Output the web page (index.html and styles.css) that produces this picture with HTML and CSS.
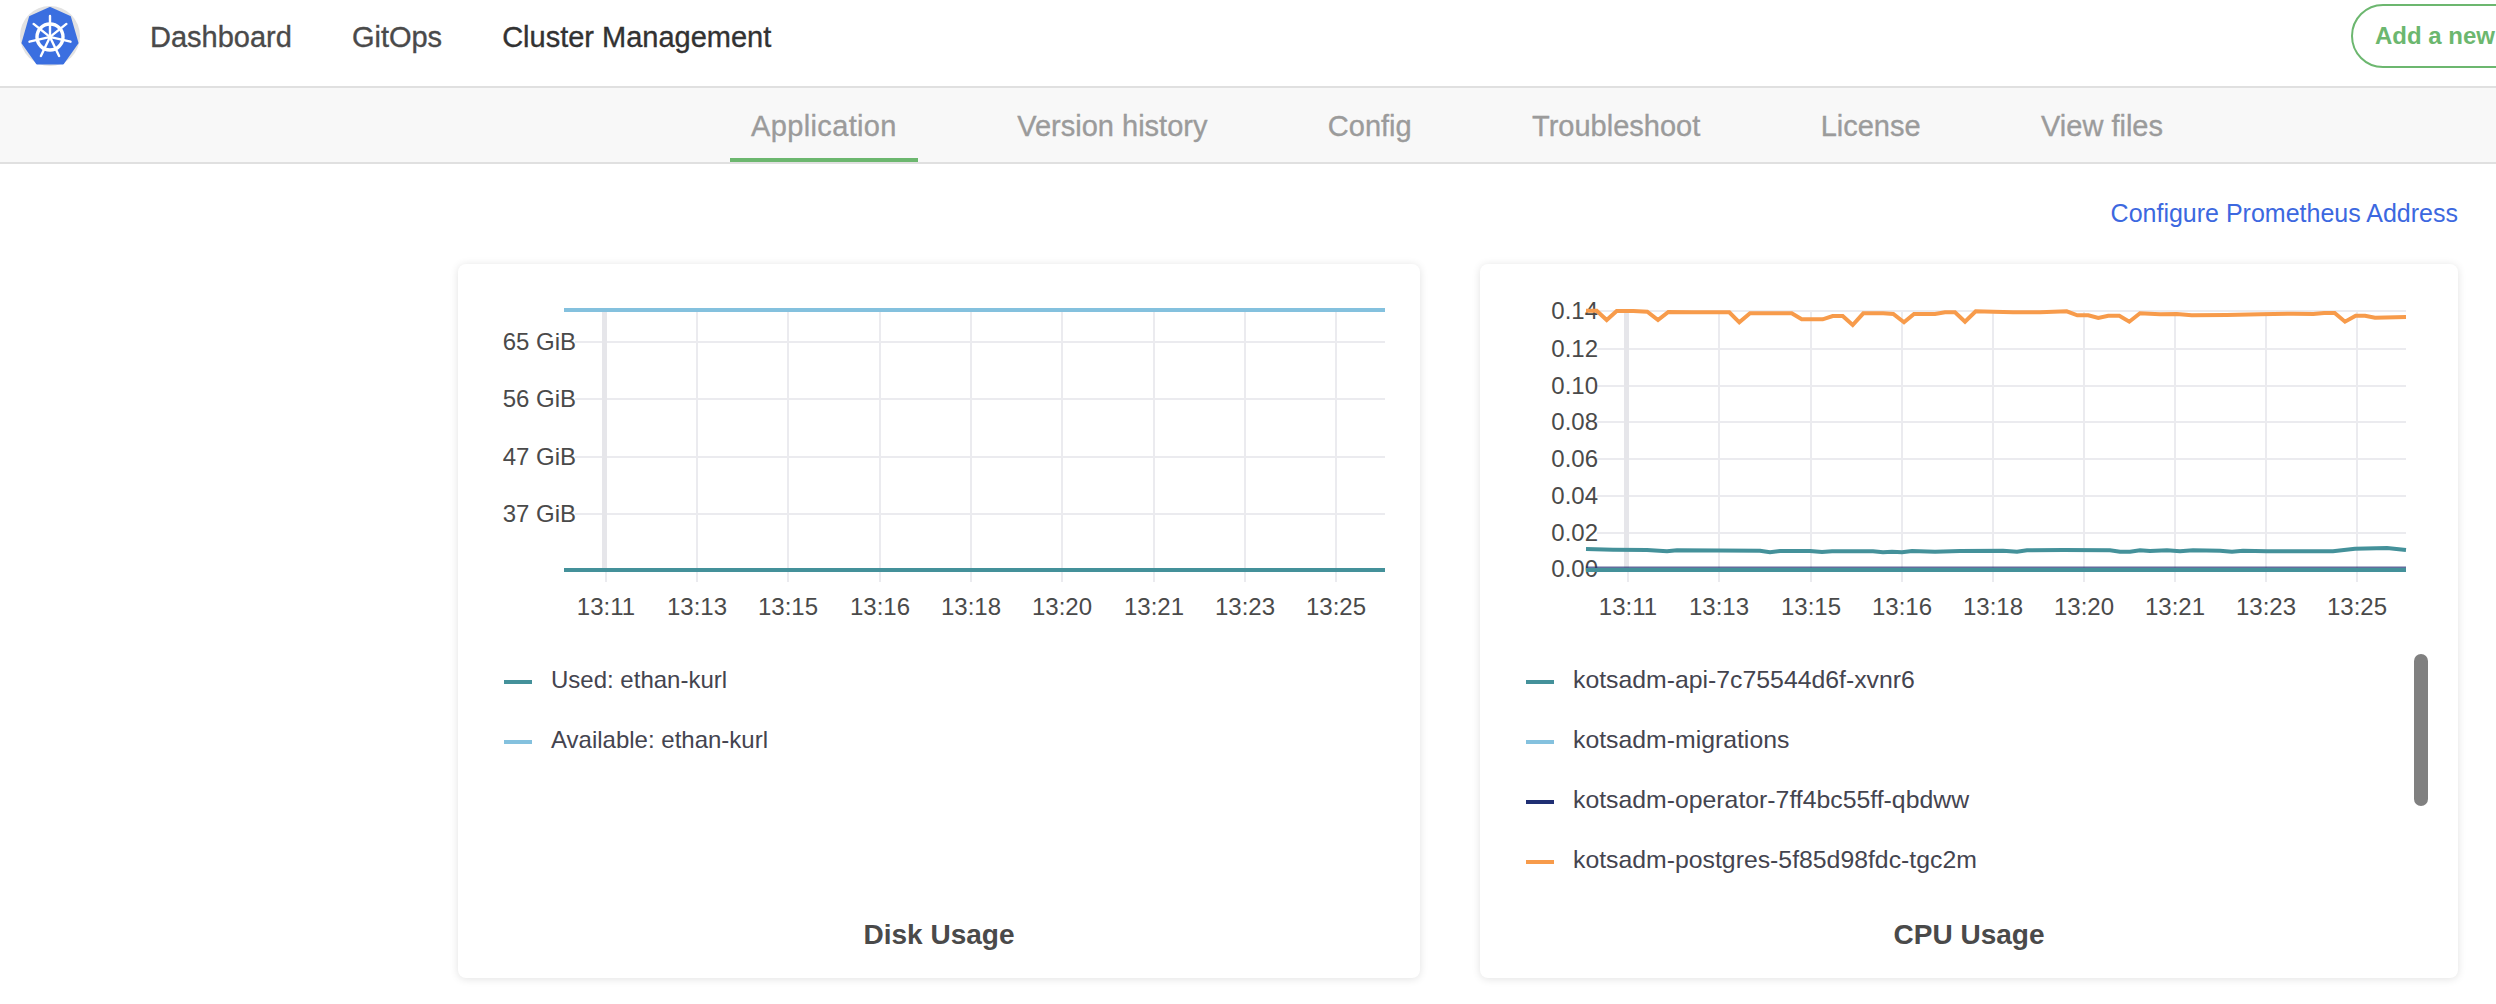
FILE: index.html
```html
<!DOCTYPE html>
<html lang="en">
<head>
  <meta charset="UTF-8" />
  <title>Application</title>
  <link rel="stylesheet" href="styles.css">
</head>
<body>
  <header class="topbar">
    <svg class="logo" viewBox="0 0 60 60" aria-label="Kubernetes">
      <ellipse cx="30" cy="30" rx="30" ry="30" fill="#e2e2e2" />
      <polygon points="30,2 50,11 57.5,37 43,57.5 17,57.5 2.5,37 10,11" fill="#3b6fe0" stroke="#3b6fe0" stroke-width="2" stroke-linejoin="round" />
      <circle cx="30" cy="31" r="13" fill="none" stroke="#fff" stroke-width="3.4" />
      <path d="M30 28V10M32.3 29.1L46.4 17.9M32.9 31.7L50.5 35.7M31.3 33.7L39.1 49.9M28.7 33.7L20.9 49.9M27.1 31.7L9.5 35.7M27.7 29.1L13.6 17.9" stroke="#fff" stroke-width="2.4" stroke-linecap="round" />
      <circle cx="30" cy="31" r="2.6" fill="#fff" />
    </svg>
    <nav class="mainnav">
      <a>Dashboard</a>
      <a>GitOps</a>
      <a class="active">Cluster Management</a>
    </nav>
    <button class="add-btn">Add a new</button>
  </header>

  <nav class="subnav">
    <a class="active">Application</a>
    <a>Version history</a>
    <a>Config</a>
    <a>Troubleshoot</a>
    <a>License</a>
    <a>View files</a>
  </nav>

  <main class="content">
    <div class="link-row"><a class="link">Configure Prometheus Address</a></div>

    <div class="cards">
      <section class="card card-disk">
        <!-- viewBox is in page pixels so the points read straight off the screen -->
        <svg class="chart" viewBox="458 264 962 366">
          <path class="grid" d="M575 342H1385M575 399H1385M575 457H1385M575 514H1385" />
          <path class="grid" d="M606 312V582M697 312V582M788 312V582M880 312V582M971 312V582M1062 312V582M1154 312V582M1245 312V582M1336 312V582" />
          <path class="axis" d="M604.5 312V570" />
          <g class="y-labels">
            <text x="576" y="350">65 GiB</text>
            <text x="576" y="407">56 GiB</text>
            <text x="576" y="465">47 GiB</text>
            <text x="576" y="522">37 GiB</text>
          </g>
          <g class="x-labels">
            <text x="606" y="615">13:11</text>
            <text x="697" y="615">13:13</text>
            <text x="788" y="615">13:15</text>
            <text x="880" y="615">13:16</text>
            <text x="971" y="615">13:18</text>
            <text x="1062" y="615">13:20</text>
            <text x="1154" y="615">13:21</text>
            <text x="1245" y="615">13:23</text>
            <text x="1336" y="615">13:25</text>
          </g>
          <path class="series s-blue" d="M564 310H1385" />
          <path class="series s-teal" d="M564 570H1385" />
        </svg>
        <ul class="legend">
          <li><span class="swatch bg-teal"></span>Used: ethan-kurl</li>
          <li><span class="swatch bg-blue"></span>Available: ethan-kurl</li>
        </ul>
        <h2 class="card-title">Disk Usage</h2>
      </section>

      <section class="card card-cpu">
        <svg class="chart" viewBox="1480 264 978 366">
          <path class="grid" d="M1597 311H2406M1597 349H2406M1597 386H2406M1597 422H2406M1597 459H2406M1597 496H2406M1597 533H2406" />
          <path class="grid" d="M1628 311V582M1719 311V582M1811 311V582M1902 311V582M1993 311V582M2084 311V582M2175 311V582M2266 311V582M2357 311V582" />
          <path class="axis" d="M1626.5 311V570" />
          <g class="y-labels">
            <text x="1598" y="319">0.14</text>
            <text x="1598" y="357">0.12</text>
            <text x="1598" y="394">0.10</text>
            <text x="1598" y="430">0.08</text>
            <text x="1598" y="467">0.06</text>
            <text x="1598" y="504">0.04</text>
            <text x="1598" y="541">0.02</text>
            <text x="1598" y="577">0.00</text>
          </g>
          <g class="x-labels">
            <text x="1628" y="615">13:11</text>
            <text x="1719" y="615">13:13</text>
            <text x="1811" y="615">13:15</text>
            <text x="1902" y="615">13:16</text>
            <text x="1993" y="615">13:18</text>
            <text x="2084" y="615">13:20</text>
            <text x="2175" y="615">13:21</text>
            <text x="2266" y="615">13:23</text>
            <text x="2357" y="615">13:25</text>
          </g>
          <path class="series s-navy thin" d="M1586 568.5H2406" />
          <path class="series s-teal" d="M1586 570H2406" />
          <polyline class="series s-teal" points="1586,549 1613,549.7 1647,550 1667,551.3 1677,550.3 1760,550.7 1770,552.3 1780,551 1810,551 1822,552 1832,551.3 1873,551.3 1883,552.3 1892,551.7 1902,552.3 1912,551 1935,551.7 1960,551 2003,550.7 2017,551.7 2027,550.3 2063,550 2110,550.3 2120,551.7 2130,551.7 2140,550.3 2150,551 2167,550.3 2180,551.3 2193,550.3 2220,550.7 2232,551.7 2243,550.7 2267,551.3 2333,551.3 2355,548.7 2387,548 2406,550" />
          <polyline class="series s-orange" points="1586,310.7 1596.7,310.7 1606.7,320 1616.7,311 1633.3,311 1647.3,311.7 1658,320 1668.3,312 1693.3,312.3 1729.3,312.3 1739.3,322.3 1750,313.3 1791.7,313.3 1801.7,319.3 1822.7,319.3 1832.7,316 1842.7,316 1852.7,325 1863.3,313.3 1883.3,313.3 1893.3,314 1904,322.3 1914,314 1935,314 1945,312.3 1955,312.3 1965,321.7 1975.7,311.3 1993.3,311.7 2013.3,312.3 2040,312.3 2066.7,311.3 2077.3,315.3 2088.3,315.3 2098.3,318 2108.3,315.7 2119.3,315.7 2129.3,321.7 2140,313.3 2160,314.3 2176.7,314 2191.7,315.3 2226.7,315 2260,314.3 2293.3,313.7 2313.3,314 2324,313 2334.7,313 2345,321.7 2355.7,315.7 2365,315.7 2375,317.7 2406,317" />
        </svg>
        <ul class="legend">
          <li><span class="swatch bg-teal"></span>kotsadm-api-7c75544d6f-xvnr6</li>
          <li><span class="swatch bg-blue"></span>kotsadm-migrations</li>
          <li><span class="swatch bg-navy"></span>kotsadm-operator-7ff4bc55ff-qbdww</li>
          <li><span class="swatch bg-orange"></span>kotsadm-postgres-5f85d98fdc-tgc2m</li>
          <li class="scroll-thumb"></li>
        </ul>
        <h2 class="card-title">CPU Usage</h2>
      </section>
    </div>
  </main>
</body>
</html>
```

FILE: styles.css
```css
html, body {
  margin: 0;
  height: 100%;
  overflow: hidden;
}
body {
  font-family: "Liberation Sans", Arial, sans-serif;
  background: #fff;
  color: #4a4a4a;
}
a {
  cursor: pointer;
}

/* top bar */
.topbar {
  display: flex;
  align-items: center;
  height: 72px;
  padding: 0 0 14px 20px;
  border-bottom: 2px solid #e0e0e0;
}
.logo {
  width: 60px;
  height: 60px;
  flex-shrink: 0;
}
.mainnav {
  display: flex;
  gap: 60px;
  margin-left: 70px;
  padding-top: 2px;
  font-size: 29px;
  -webkit-text-stroke: 0.35px currentColor;
}
.mainnav .active {
  color: #323232;
}
/* runs off the right edge of the window */
.add-btn {
  flex-shrink: 0;
  width: 200px;
  height: 64px;
  margin-left: auto;
  margin-right: -55px;
  padding: 0 0 0 22px;
  border: 2px solid #6cb76f;
  border-radius: 32px;
  background: #fff;
  color: #6cb76f;
  font: bold 24px "Liberation Sans", Arial, sans-serif;
  text-align: left;
}

/* sub navigation */
.subnav {
  display: flex;
  gap: 78.4px;
  height: 74px;
  padding-left: 730px;
  background: #f8f8f8;
  border-bottom: 2px solid #e0e0e0;
  color: #9b9b9b;
  font-size: 29px;
  -webkit-text-stroke: 0.35px currentColor;
}
.subnav a {
  display: flex;
  align-items: center;
  padding: 7px 21px 0;
  border-bottom: 4px solid transparent;
}
.subnav .active {
  border-bottom-color: #6cb76f;
  letter-spacing: 0.36px;
}

/* content */
.content {
  padding: 0 38px 0 458px;
}
.link-row {
  display: flex;
  justify-content: flex-end;
  height: 100px;
  padding-top: 34px;
  box-sizing: border-box;
}
.link {
  color: #3c68e0;
  font-size: 25px;
  line-height: 30px;
}
.cards {
  display: flex;
  gap: 60px;
}
.card {
  display: flex;
  flex-direction: column;
  box-sizing: border-box;
  height: 714px;
  border-radius: 8px;
  background: #fff;
  box-shadow: 0 1px 8px rgba(0,0,0,0.12);
}
.card-disk {
  width: 962px;
}
.card-cpu {
  width: 978px;
}
.chart {
  display: block;
  width: 100%;
  height: 366px;
}
.grid {
  fill: none;
  stroke: #ebebef;
  stroke-width: 2;
}
.axis {
  fill: none;
  stroke: #e6e6ea;
  stroke-width: 5;
}
.y-labels, .x-labels {
  fill: #4a4a4a;
  font-size: 24px;
}
.y-labels {
  text-anchor: end;
}
.x-labels {
  text-anchor: middle;
}
.series {
  fill: none;
  stroke-width: 4;
}
.series.thin {
  opacity: 0.7;
}
.s-teal { stroke: #44919a; }
.s-blue { stroke: #84c1de; }
.s-navy { stroke: #1f2f73; }
.s-orange { stroke: #f79b4b; }
.bg-teal { background: #44919a; }
.bg-blue { background: #84c1de; }
.bg-navy { background: #1f2f73; }
.bg-orange { background: #f79b4b; }

/* legend */
.legend {
  position: relative;
  margin: 20px 0 0;
  padding: 0 0 0 46px;
  list-style: none;
  color: #44444f;
  font-size: 24px;
}
.card-cpu .legend {
  font-size: 24.8px;
}
.legend li {
  display: flex;
  align-items: center;
  gap: 19px;
  height: 60px;
}
.swatch {
  width: 28px;
  height: 4px;
  margin-top: 4px;
}
.legend .scroll-thumb {
  position: absolute;
  top: 4px;
  right: 30px;
  width: 14px;
  height: 152px;
  border-radius: 7px;
  background: #808080;
}
.card-title {
  margin: auto 0 0;
  padding-bottom: 27px;
  text-align: center;
  font-size: 28px;
  line-height: 32px;
  color: #4a4a4a;
}
```
